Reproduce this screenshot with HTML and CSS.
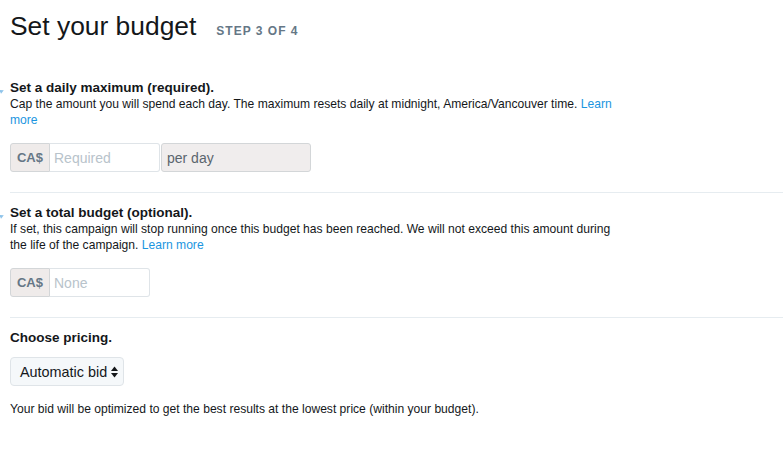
FILE: index.html
```html
<!DOCTYPE html>
<html lang="en">
<head>
    <meta charset="UTF-8">
    <meta name="viewport" content="width=device-width, initial-scale=1.0">
    <title>Set your budget</title>
    <link rel="stylesheet" href="styles.css">
</head>
<body>

    <div class="page">
        <div class="header">
            <h1>Set your budget</h1>
            <span class="step">STEP 3 OF 4</span>
        </div>

        <!-- Daily maximum -->
        <div class="section">
            <span class="marker"></span>
            <h2>Set a daily maximum (required).</h2>
            <p class="desc">Cap the amount you will spend each day. The maximum resets daily at midnight, America/Vancouver time. <a href="#">Learn more</a></p>
            <div class="input-row">
                <span class="addon">CA$</span>
                <input type="text" class="amount amount-daily" placeholder="Required">
                <span class="suffix">per day</span>
            </div>
        </div>

        <!-- Total budget -->
        <div class="section">
            <span class="marker"></span>
            <h2>Set a total budget (optional).</h2>
            <p class="desc">If set, this campaign will stop running once this budget has been reached. We will not exceed this amount during the life of the campaign. <a href="#">Learn more</a></p>
            <div class="input-row">
                <span class="addon">CA$</span>
                <input type="text" class="amount amount-total" placeholder="None">
            </div>
        </div>

        <!-- Pricing -->
        <div class="section last">
            <h2>Choose pricing.</h2>
            <div class="select">
                <span>Automatic bid</span>
                <svg class="arrows" width="7" height="12" viewBox="0 0 7 12">
                    <path d="M3.5 0.5 L7 5 L0 5 Z" fill="#14171a"/>
                    <path d="M3.5 11.5 L7 7 L0 7 Z" fill="#14171a"/>
                </svg>
            </div>
            <p class="note">Your bid will be optimized to get the best results at the lowest price (within your budget).</p>
        </div>
    </div>

</body>
</html>
```

FILE: styles.css
```css
body {
    margin: 0;
    background-color: #fff;
    color: #14171a;
    font-family: 'Liberation Sans', Arial, sans-serif;
}
.page {
    padding-left: 10px;
}
.header {
    display: flex;
    align-items: baseline;
    padding-top: 10px;
    margin-bottom: 26px;
}
h1 {
    margin: 0;
    font-size: 26.4px;
    line-height: 32px;
    font-weight: normal;
    color: #14171a;
}
.step {
    margin-left: 20px;
    font-size: 12px;
    font-weight: bold;
    letter-spacing: 1px;
    color: #657786;
}
.section {
    position: relative;
    padding: 12px 0 20px;
    border-bottom: 1px solid #e6ecf0;
}
.section.last {
    border-bottom: none;
}
.marker {
    position: absolute;
    left: -10px;
    top: 21px;
    width: 0;
    height: 0;
    border-left: 4px solid #8fc4ea;
    border-top: 2px solid transparent;
    border-bottom: 2px solid transparent;
    transform: rotate(-25deg);
}
h2 {
    margin: 0;
    font-size: 13.5px;
    line-height: 16px;
    font-weight: bold;
}
.desc {
    margin: 0;
    width: 614px;
    font-size: 12.1px;
    line-height: 16px;
}
.desc a {
    color: #1b95e0;
    text-decoration: none;
}
.input-row {
    display: flex;
    margin-top: 15px;
    height: 29px;
}
.addon {
    display: flex;
    align-items: center;
    justify-content: center;
    width: 38px;
    background-color: #efebea;
    border: 1px solid #d3d6d8;
    border-radius: 3px 0 0 3px;
    font-size: 13px;
    font-weight: bold;
    color: #657786;
}
.amount {
    box-sizing: border-box;
    height: 29px;
    margin: 0;
    padding: 0 4px;
    border: 1px solid #dfe4e8;
    border-left: none;
    border-radius: 0 3px 3px 0;
    font-family: 'Liberation Sans', Arial, sans-serif;
    font-size: 14px;
    color: #14171a;
    outline: none;
}
.amount::placeholder {
    color: #b8c3cb;
}
.amount-daily {
    width: 110px;
}
.amount-total {
    width: 100px;
}
.suffix {
    display: flex;
    align-items: center;
    box-sizing: border-box;
    width: 150px;
    margin-left: 1px;
    padding-left: 5px;
    background-color: #f0eded;
    border: 1px solid #d3d6d8;
    border-radius: 3px;
    font-size: 14px;
    color: #5a656e;
}
.select {
    display: inline-flex;
    align-items: center;
    box-sizing: border-box;
    height: 29px;
    margin-top: 11px;
    padding: 0 5px 0 9px;
    background-color: #f5f8fa;
    border: 1px solid #dfe4e8;
    border-radius: 4px;
    font-size: 14.4px;
}
.select .arrows {
    margin-left: 4px;
}
.note {
    margin: 15px 0 0;
    font-size: 12.1px;
    line-height: 16px;
}
```
